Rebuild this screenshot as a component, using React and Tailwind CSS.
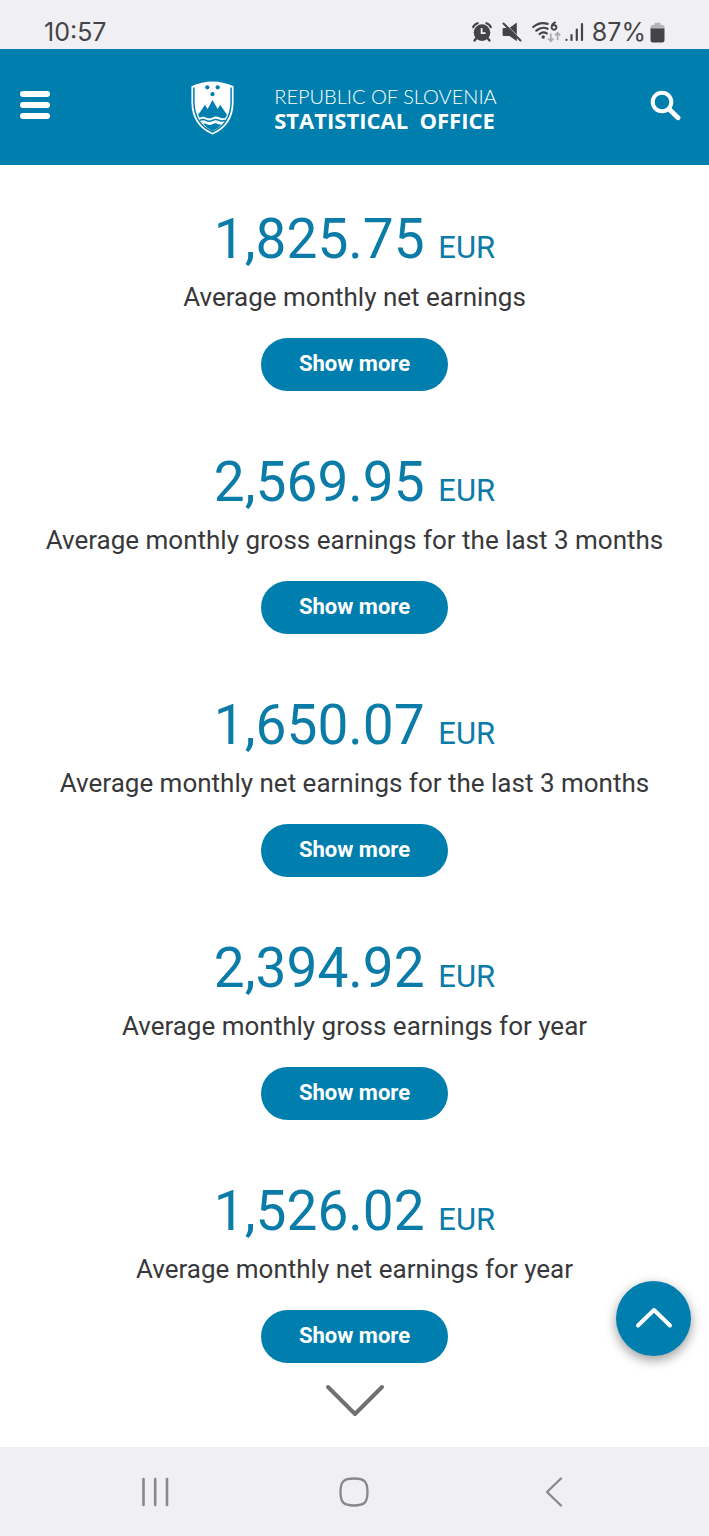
const stats = [
  { value: '1,825.75', label: 'Average monthly net earnings' },
  { value: '2,569.95', label: 'Average monthly gross earnings for the last 3 months' },
  { value: '1,650.07', label: 'Average monthly net earnings for the last 3 months' },
  { value: '2,394.92', label: 'Average monthly gross earnings for year' },
  { value: '1,526.02', label: 'Average monthly net earnings for year' },
];

function AlarmIcon() {
  return (
    <svg width="20" height="20" viewBox="0 0 20 20" fill="none" aria-hidden="true">
      <path d="M1.200 5.200Q2.300 2 5.600 1.200M18.800 5.200Q17.700 2 14.400 1.200" stroke="#444448" strokeWidth="2.200" strokeLinecap="round" />
      <path d="M4.500 16l-2 2.400M15.500 16l2 2.400" stroke="#444448" strokeWidth="2.400" strokeLinecap="round" />
      <circle cx="10" cy="10.600" r="8.300" fill="#444448" />
      <path d="M9.600 6v5.200h4" stroke="#efeff4" strokeWidth="1.800" />
    </svg>
  );
}

function MuteIcon() {
  return (
    <svg width="20" height="20" viewBox="0 0 20 20" fill="none" aria-hidden="true">
      <path d="M7.800 5.800L14.800.6v12.200zM.6 7.200Q.6 6 1.800 6h3.600l9.400 9.200v4L7.500 14H1.800Q.6 14 .6 12.800z" fill="#444448" />
      <path d="M1.500 1.500l17 17" stroke="#444448" strokeWidth="2" strokeLinecap="round" />
    </svg>
  );
}

function WifiIcon() {
  return (
    <svg width="29" height="22" viewBox="0 0 29 22" fill="none" aria-hidden="true">
      <path d="M1.200 6Q8 .2 15.600 2.900" stroke="#444448" strokeWidth="2.200" strokeLinecap="round" />
      <path d="M4.300 9.700Q9.800 5 15.600 7.800M7.600 13Q11.200 10 14.800 12.400" stroke="#444448" strokeWidth="2.200" strokeLinecap="round" />
      <circle cx="11.200" cy="16" r="1.700" fill="#444448" />
      <path d="M23.200 1.400Q19.800 2.800 19.600 6.200a2.400 2.400 0 1 0 2.400-2.200Q20.400 4 19.800 5.500" stroke="#444448" strokeWidth="1.900" strokeLinecap="round" />
      <path d="M18.800 12.500v7.500M16.200 17.500l2.600 2.800 2.600-2.800M25.600 19v-7M23 14.500l2.600-2.800 2.600 2.800" stroke="#a9a9ad" strokeWidth="1.700" />
    </svg>
  );
}

function SignalIcon() {
  return (
    <svg width="19" height="20" viewBox="0 0 19 20" aria-hidden="true">
      <g stroke="#444448" strokeWidth="2.200" strokeLinecap="round">
        <path d="M1.500 17.800v.2M6.500 13v5M11.800 7.500V18M17 2v16" />
      </g>
    </svg>
  );
}

function BatteryIcon() {
  return (
    <svg width="15" height="21" viewBox="0 0 15 21" aria-hidden="true">
      <path d="M.5 7V5q0-2 2-2h1.800V2Q4.300.8 5.500.8h4q1.200 0 1.200 1.200v1h1.800q2 0 2 2v2z" fill="#b5b5b9" />
      <path d="M.5 6.500h14V18q0 2.500-2.500 2.500H3Q.5 20.500.5 18z" fill="#444448" />
    </svg>
  );
}

function CoatOfArms() {
  return (
    <svg width="43" height="54" viewBox="0 0 43 54" fill="none" aria-hidden="true">
      <path d="M.4 5.200Q21.500-4.200 42.600 5.200V22Q42 45 21.500 53.600Q1 45 .4 22z" fill="#fff" />
      <path d="M2.900 6.500V22Q3.700 43 21.500 51Q39.300 43 40.100 22V6.500" stroke="#007fae" strokeWidth="1.500" />
      <path d="M7.300 34.500Q7.300 32.500 9.500 30.500L14 23.800l2.600 4.200L21.500 19l5.200 9 2.500-4.200 4.700 6.900q2 2 2 3.800l-1.500 2.200q-3.200 1.200-6.300-.4-3.300-1.700-6.600.2-3.300 1.700-6.500 0-3.200-1.700-6.200.2z" fill="#007fae" />
      <path d="M9 39.400q3-1.800 6.200 0 3.100 1.600 6.300-.1 3.300-1.800 6.600 0 3 1.400 5.900 0" stroke="#007fae" strokeWidth="1.500" />
      <path d="M12 42.800q2-.6 3.900.4 2.800 1.400 5.600 0 3-1.700 5.800 0 1.900.8 3.700 0-3.800 4.200-9.500 6.800-5.700-2.600-9.500-7.200z" fill="#007fae" />
      <g fill="#007fae">
        <circle cx="16.300" cy="6.300" r="2.100" />
        <circle cx="26.700" cy="6.300" r="2.100" />
        <circle cx="21.500" cy="13.200" r="2.100" />
      </g>
    </svg>
  );
}

function StatusBar() {
  return (
    <div className="flex h-[49px] items-end justify-between bg-[#efeff4] pr-11 pb-1 pl-11 text-[#444448]">
      <span className="font-[Inter,sans-serif] text-[25px] leading-[26px]">10:57</span>
      <div className="flex items-center gap-1">
        <div className="flex items-center gap-[10px]">
          <AlarmIcon />
          <MuteIcon />
          <WifiIcon />
        </div>
        <SignalIcon />
        <span className="ml-1 font-[Inter,sans-serif] text-[25px] leading-[26px]">87%</span>
        <BatteryIcon />
      </div>
    </div>
  );
}

function Header() {
  return (
    <header className="flex h-[116px] items-center justify-between bg-[#007fae] pr-7 pb-1 pl-5 text-white">
      <button type="button" aria-label="Menu" className="flex w-[30px] flex-col gap-[5px]">
        <span className="h-[6px] rounded-full bg-white" />
        <span className="h-[6px] rounded-full bg-white" />
        <span className="h-[6px] rounded-full bg-white" />
      </button>
      <a href="#home" className="mr-3 flex items-center gap-10 pt-[6px]">
        <CoatOfArms />
        <span className="flex flex-col whitespace-pre">
          <span className="font-[Lato,sans-serif] text-[20px] leading-6 font-light">REPUBLIC OF SLOVENIA</span>
          <span className="font-['Open_Sans',sans-serif] text-[22px] leading-6 font-bold">STATISTICAL  OFFICE</span>
        </span>
      </a>
      <button type="button" aria-label="Search">
        <svg width="31" height="31" viewBox="0 0 31 31" fill="none" aria-hidden="true">
          <circle cx="12" cy="12" r="9.300" stroke="#fff" strokeWidth="4" />
          <path d="M19.500 19.500l8.500 8.300" stroke="#fff" strokeWidth="4.800" strokeLinecap="round" />
        </svg>
      </button>
    </header>
  );
}

function Stat({ value, label }) {
  return (
    <section className="flex flex-col items-center text-center">
      <p className="text-[55px] leading-[64px] text-[#0b7ba8]">
        {value} <span className="text-[31px] leading-none">EUR</span>
      </p>
      <p className="mt-[10px] text-[26px] leading-8 text-[#38383a]">{label}</p>
      <button type="button" className="mt-[25px] h-[53px] rounded-full bg-[#007fae] px-[38px] pb-[2px] text-[22px] font-bold text-white">
        Show more
      </button>
    </section>
  );
}

function NavBar() {
  return (
    <nav className="grid h-[89px] grid-cols-3 items-center justify-items-center bg-[#efeff4] px-[55px]">
      <button type="button" aria-label="Recent apps">
        <svg width="30" height="30" viewBox="0 0 30 30" aria-hidden="true">
          <path d="M3.500 2v26M15.200 2v26M27 2v26" stroke="#88888c" strokeWidth="2.600" strokeLinecap="round" />
        </svg>
      </button>
      <button type="button" aria-label="Home">
        <svg width="30" height="30" viewBox="0 0 30 30" fill="none" aria-hidden="true">
          <path d="M15 1.500c10.500 0 13.500 3 13.500 13.500s-3 13.500-13.500 13.500S1.500 25.500 1.500 15 4.500 1.500 15 1.500z" stroke="#88888c" strokeWidth="2.300" />
        </svg>
      </button>
      <button type="button" aria-label="Back">
        <svg width="30" height="30" viewBox="0 0 30 30" fill="none" aria-hidden="true">
          <path d="M22 1.500L8 15l14 13.500" stroke="#88888c" strokeWidth="2.300" strokeLinecap="round" strokeLinejoin="round" />
        </svg>
      </button>
    </nav>
  );
}

export default function App() {
  return (
    <div className="flex min-h-screen flex-col bg-white font-[Roboto,sans-serif]">
      <StatusBar />
      <Header />
      <main className="relative flex flex-1 flex-col items-center pt-[42px]">
        <div className="flex flex-col gap-[59px]">
          {stats.map((s) => (
            <Stat key={s.value} value={s.value} label={s.label} />
          ))}
        </div>
        <button type="button" aria-label="Scroll down" className="mt-[21px]">
          <svg width="60" height="34" viewBox="0 0 60 34" fill="none" aria-hidden="true">
            <path d="M3 3l27 27L57 3" stroke="#707072" strokeWidth="4" strokeLinecap="round" strokeLinejoin="round" />
          </svg>
        </button>
        <button
          type="button"
          aria-label="Back to top"
          className="absolute right-[18px] bottom-[91px] flex size-[75px] items-center justify-center rounded-full bg-[#007fae] shadow-[0_4px_12px_rgba(0,0,0,0.4)]"
        >
          <svg width="38" height="24" viewBox="0 0 38 24" fill="none" aria-hidden="true">
            <path d="M3 18.500L19 3l16 15.500" stroke="#fff" strokeWidth="4" strokeLinecap="round" strokeLinejoin="round" />
          </svg>
        </button>
      </main>
      <NavBar />
    </div>
  );
}
